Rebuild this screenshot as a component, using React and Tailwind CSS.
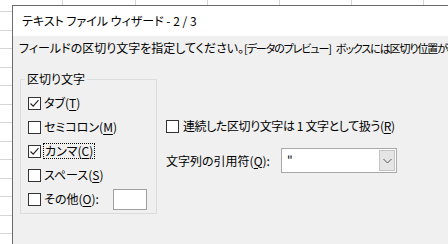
import React from "react";

const font = {
  fontFamily: '"Noto Sans CJK JP", "Noto Sans", sans-serif',
};

function Check({ checked }) {
  return (
    <span className="flex h-[13px] w-[13px] shrink-0 items-center justify-center border border-[#333333] bg-white">
      {checked && (
        <svg width="11" height="11" viewBox="0 0 11 11">
          <path d="M1.5 5.5 L4.2 8.2 L9.5 2.2" fill="none" stroke="#222" strokeWidth="1.1" />
        </svg>
      )}
    </span>
  );
}

function U({ children }) {
  return <span className="underline underline-offset-2">{children}</span>;
}

function Row({ checked, children, focus }) {
  return (
    <div className="flex h-[24px] items-center pl-[7px]">
      <Check checked={checked} />
      <span
        className={
          focus
            ? "ml-[2px] border border-dotted border-black px-[1px] leading-[14px]"
            : "ml-[3px] leading-[16px]"
        }
      >
        {children}
      </span>
    </div>
  );
}

export default function App() {
  const hLines = [];
  for (let y = 11; y < 244; y += 18.5) hLines.push(y);
  const vLines = [62, 135, 207, 279, 351, 423];
  return (
    <div
      className="relative h-[244px] w-[448px] overflow-hidden bg-white text-[12px] text-black [font-feature-settings:'palt']"
      style={font}
    >
      <svg className="absolute left-0 top-0" width="448" height="244">
        {hLines.map((y) => (
          <line key={y} x1="0" x2="448" y1={Math.round(y) + 0.5} y2={Math.round(y) + 0.5} stroke="#d6d6d6" />
        ))}
        {vLines.map((x) => (
          <line key={x} x1={x + 0.5} x2={x + 0.5} y1="0" y2="244" stroke="#d6d6d6" />
        ))}
      </svg>

      <div className="absolute left-[12px] top-[5px] flex h-[260px] w-[460px] flex-col border-l border-t border-[#6b6b6b] bg-[#f0f0f0]">
        <div className="flex h-[30px] items-center bg-white pl-[9px] text-[12px]">
          テキスト ファイル ウィザード - 2 / 3
        </div>
        <div className="pl-[6px] pt-[4px]">
          <div className="flex h-[16px] w-[430px] items-baseline overflow-hidden whitespace-nowrap leading-[16px]">
            <span>フィールドの区切り文字を指定してください。</span>
            <span className="text-[11px] tracking-[-1.1px]">[データのプレビュー]</span>
            <span className="ml-[5px] text-[11px] tracking-[-1.1px]">ボックスには区切り位置が表</span>
          </div>
          <div className="mt-[15px] flex">
            <fieldset className="ml-[1px] w-[137px] border border-[#dcdcdc] px-0 pb-[2px] pt-[4px]">
              <legend className="ml-[4px] px-[2px] leading-[16px]">区切り文字</legend>
              <Row checked>
                タブ(<U>T</U>)
              </Row>
              <Row>
                セミコロン(<U>M</U>)
              </Row>
              <Row checked focus>
                カンマ(<U>C</U>)
              </Row>
              <Row>
                スペース(<U>S</U>)
              </Row>
              <div className="flex h-[24px] items-center pl-[7px]">
                <Check />
                <span className="ml-[3px] w-[69px] leading-[16px]">
                  その他(<U>O</U>):
                </span>
                <span className="h-[21px] w-[34px] border border-[#a0a0a0] bg-white" />
              </div>
            </fieldset>
            <div className="ml-[9px] flex flex-col pt-[43px]">
              <div className="flex h-[24px] items-center">
                <Check />
                <span className="ml-[4px] leading-[16px] tracking-[-0.4px]">
                  連続した区切り文字は 1 文字として扱う(<U>R</U>)
                </span>
              </div>
              <div className="mt-[10px] flex h-[25px] items-center">
                <span className="w-[115px] leading-[16px]">
                  文字列の引用符(<U>Q</U>):
                </span>
                <div className="flex h-[25px] w-[116px] border border-[#a8a8a8] bg-white">
                  <span className="flex-1 pl-[5px] leading-[22px]">"</span>
                  <span className="m-[1px] flex w-[16px] items-center justify-center border border-[#c4c4c4] bg-[#e5e5e5]">
                    <svg width="9" height="6" viewBox="0 0 9 6">
                      <path d="M0.5 1 L4.5 5 L8.5 1" fill="none" stroke="#555" strokeWidth="1" />
                    </svg>
                  </span>
                </div>
              </div>
            </div>
          </div>
        </div>
      </div>
    </div>
  );
}
